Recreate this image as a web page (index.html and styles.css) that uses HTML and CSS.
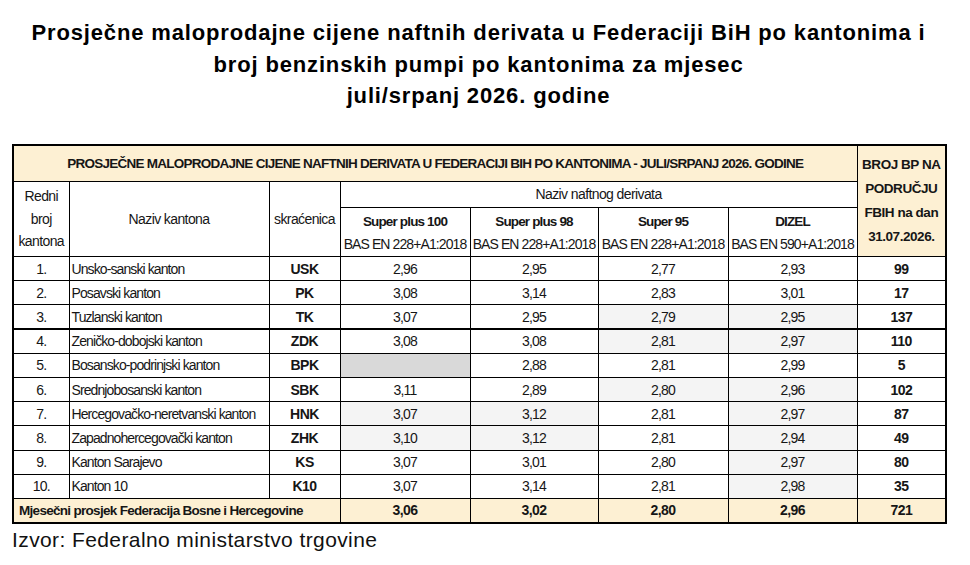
FILE: index.html
```html
<!DOCTYPE html>
<html lang="bs">
<head>
<meta charset="utf-8">
<title>Prosječne maloprodajne cijene naftnih derivata</title>
<link rel="stylesheet" href="styles.css">
</head>
<body>
<div class="page">
  <h1 class="title">Prosječne maloprodajne cijene naftnih derivata u Federaciji BiH po kantonima i<br>broj benzinskih pumpi po kantonima za mjesec<br>juli/srpanj 2026. godine</h1>
  <table class="prices">
    <colgroup>
      <col class="c-rb"><col class="c-name"><col class="c-abbr"><col class="c-p1"><col class="c-p2"><col class="c-p3"><col class="c-p4"><col class="c-bp">
    </colgroup>
    <thead>
      <tr class="r-title">
        <th colspan="7" class="hd-main">PROSJEČNE MALOPRODAJNE CIJENE NAFTNIH DERIVATA U FEDERACIJI BIH PO KANTONIMA - JULI/SRPANJ 2026. GODINE</th>
        <th rowspan="3" class="hd-bp">BROJ BP NA<br>PODRUČJU<br>FBIH na dan<br>31.07.2026.</th>
      </tr>
      <tr class="r-naziv">
        <th rowspan="2" class="hd-plain">Redni<br>broj<br>kantona</th>
        <th rowspan="2" class="hd-plain">Naziv kantona</th>
        <th rowspan="2" class="hd-plain">skraćenica</th>
        <th colspan="4" class="hd-plain">Naziv naftnog derivata</th>
      </tr>
      <tr class="r-fuel">
        <th class="hd-fuel"><b>Super plus 100</b><span>BAS EN 228+A1:2018</span></th>
        <th class="hd-fuel"><b>Super plus 98</b><span>BAS EN 228+A1:2018</span></th>
        <th class="hd-fuel"><b>Super 95</b><span>BAS EN 228+A1:2018</span></th>
        <th class="hd-fuel"><b>DIZEL</b><span>BAS EN 590+A1:2018</span></th>
      </tr>
    </thead>
    <tbody>
      <tr><td class="num">1.</td><td class="name">Unsko-sanski kanton</td><td class="abbr">USK</td><td>2,96</td><td>2,95</td><td>2,77</td><td>2,93</td><td class="bp">99</td></tr>
      <tr><td class="num">2.</td><td class="name">Posavski kanton</td><td class="abbr">PK</td><td>3,08</td><td>3,14</td><td>2,83</td><td>3,01</td><td class="bp">17</td></tr>
      <tr class="thick"><td class="num">3.</td><td class="name">Tuzlanski kanton</td><td class="abbr">TK</td><td>3,07</td><td>2,95</td><td class="sh">2,79</td><td class="sh">2,95</td><td class="bp">137</td></tr>
      <tr><td class="num">4.</td><td class="name">Zeničko-dobojski kanton</td><td class="abbr">ZDK</td><td>3,08</td><td>3,08</td><td class="sh">2,81</td><td class="sh">2,97</td><td class="bp">110</td></tr>
      <tr><td class="num">5.</td><td class="name">Bosansko-podrinjski kanton</td><td class="abbr">BPK</td><td class="blank"></td><td>2,88</td><td>2,81</td><td>2,99</td><td class="bp">5</td></tr>
      <tr><td class="num">6.</td><td class="name">Srednjobosanski kanton</td><td class="abbr">SBK</td><td>3,11</td><td>2,89</td><td class="sh">2,80</td><td class="sh">2,96</td><td class="bp">102</td></tr>
      <tr><td class="num">7.</td><td class="name">Hercegovačko-neretvanski kanton</td><td class="abbr">HNK</td><td class="sh">3,07</td><td class="sh">3,12</td><td>2,81</td><td class="sh">2,97</td><td class="bp">87</td></tr>
      <tr><td class="num">8.</td><td class="name">Zapadnohercegovački kanton</td><td class="abbr">ZHK</td><td class="sh">3,10</td><td class="sh">3,12</td><td>2,81</td><td class="sh">2,94</td><td class="bp">49</td></tr>
      <tr><td class="num">9.</td><td class="name">Kanton Sarajevo</td><td class="abbr">KS</td><td>3,07</td><td>3,01</td><td>2,80</td><td class="sh">2,97</td><td class="bp">80</td></tr>
      <tr><td class="num">10.</td><td class="name">Kanton 10</td><td class="abbr">K10</td><td>3,07</td><td>3,14</td><td>2,81</td><td class="sh">2,98</td><td class="bp">35</td></tr>
      <tr class="total"><td colspan="3" class="tot-label">Mjesečni prosjek Federacija Bosne i Hercegovine</td><td>3,06</td><td>3,02</td><td>2,80</td><td>2,96</td><td>721</td></tr>
    </tbody>
  </table>
  <p class="source">Izvor: Federalno ministarstvo trgovine</p>
</div>
</body>
</html>
```
FILE: styles.css
```css
html, body {
  margin: 0;
  padding: 0;
  background: #ffffff;
}
.page {
  width: 933px;
  margin: 0 0 0 12px;
  font-family: "Liberation Sans", Arial, sans-serif;
  color: #000;
}
.title {
  margin: 17px 0 0 0;
  font-size: 22px;
  line-height: 31.5px;
  letter-spacing: 0.85px;
  font-weight: bold;
  text-align: center;
}
.prices {
  margin-top: 32px;
  width: 933px;
  table-layout: fixed;
  border-collapse: collapse;
  border: 2px solid #000;
  font-family: "Liberation Sans", Arial, sans-serif;
  font-size: 14px;
  letter-spacing: -0.8px;
  color: #161616;
}
.c-rb { width: 56px; }
.c-name { width: 200px; }
.c-abbr { width: 71px; }
.c-p1 { width: 130px; }
.c-p2 { width: 128px; }
.c-p3 { width: 130px; }
.c-p4 { width: 129px; }
.c-bp { width: 89px; }
.prices th, .prices td {
  border: 1px solid #000;
  padding: 0;
  text-align: center;
  vertical-align: middle;
  white-space: nowrap;
  overflow: hidden;
}
.prices th {
  font-weight: normal;
}
.r-title { height: 37px; }
.r-naziv { height: 26px; }
.r-fuel { height: 49px; }
.hd-main {
  background: #fdf0d3;
  font-weight: bold !important;
  font-size: 13.5px;
  letter-spacing: -0.75px;
}
.hd-bp {
  background: #fdf0d3;
  font-weight: bold !important;
  font-size: 13.5px;
  letter-spacing: -0.45px;
  line-height: 24px;
}
.hd-plain {
  line-height: 22.5px;
  letter-spacing: -0.6px;
}
.hd-fuel b {
  display: block;
  font-weight: bold;
  font-size: 13.5px;
  line-height: 24px;
  letter-spacing: -0.85px;
}
.hd-fuel span {
  display: block;
  line-height: 20px;
  letter-spacing: -0.9px;
}
.prices tbody tr { height: 24.2px; }
.prices td.name {
  text-align: left;
  padding-left: 2px;
  letter-spacing: -0.9px;
}
.prices td.abbr,
.prices td.bp {
  font-weight: bold;
  letter-spacing: -0.5px;
}
.prices td.sh { background: #f4f4f4; }
.prices td.blank { background: #d9d9d9; }
.prices tr.thick td { border-bottom: 2px solid #000; }
.prices tr.total td {
  background: #fdf0d3;
  font-weight: bold;
  letter-spacing: -0.5px;
}
.prices tr.total td.tot-label {
  text-align: left;
  padding-left: 5px;
  font-size: 13.5px;
  letter-spacing: -0.7px;
}
.source {
  margin: 3px 0 0 0;
  font-size: 21px;
  line-height: 26px;
  letter-spacing: 0.4px;
  color: #111;
}
```
